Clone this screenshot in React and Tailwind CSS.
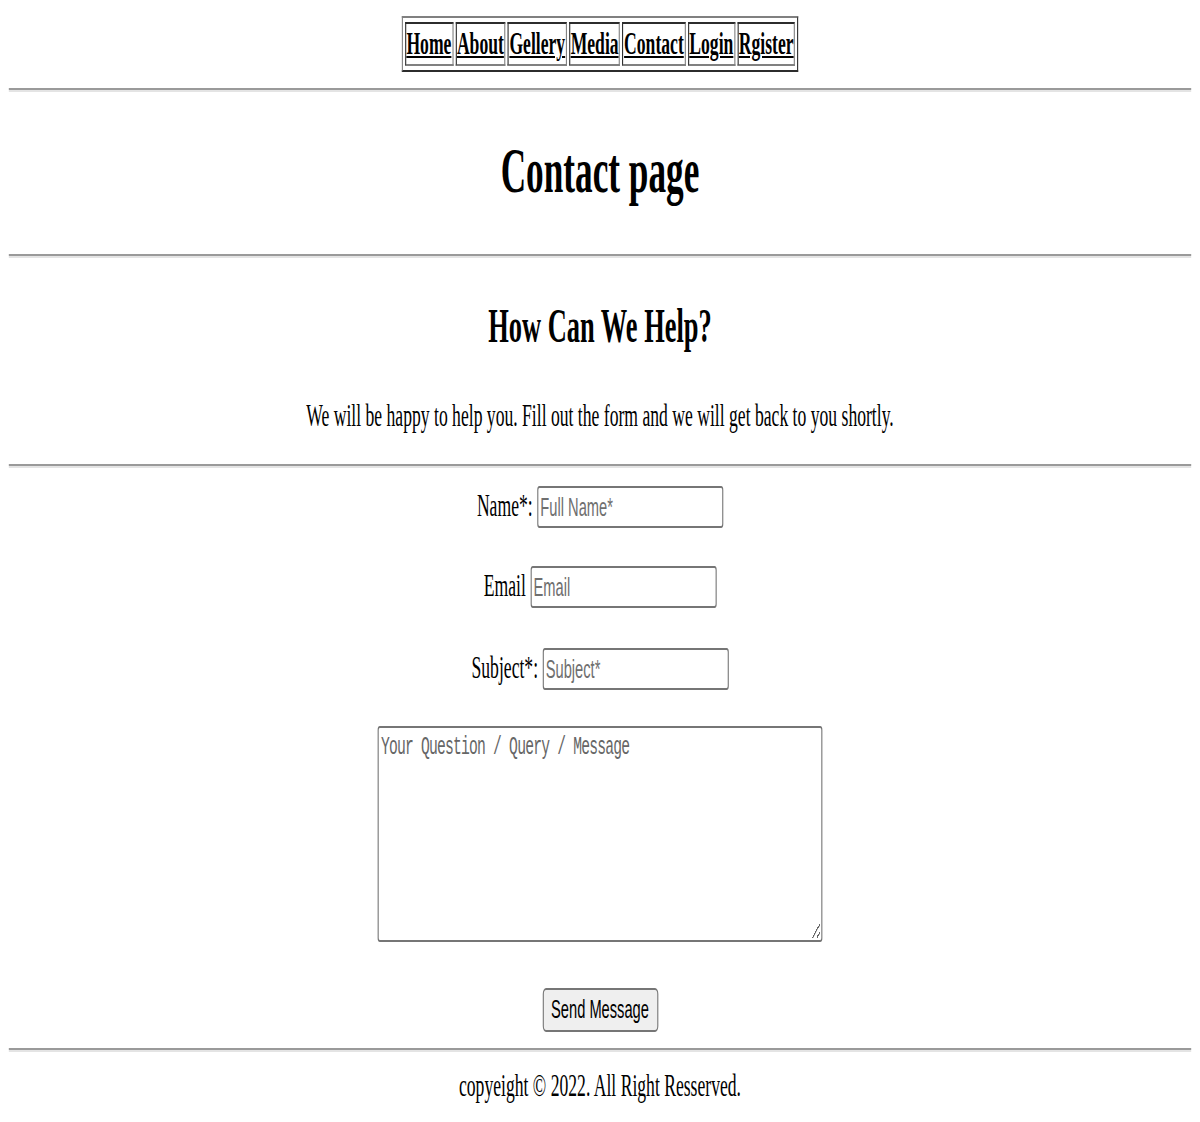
import React from "react";

const navItems = ["Home", "About", "Gellery", "Media", "Contact", "Login", "Rgister"];

function Rule() {
  return (
    <hr className="my-2 h-[2px] border-0 border-t border-b border-t-[#9a9a9a] border-b-[#e4e4e4]" />
  );
}

const inputCls =
  "h-[21px] w-[169px] rounded-[2px] border border-[#767676] px-[2px] py-[1px] font-['Liberation_Sans',Arial,sans-serif] text-[13.33px] placeholder:text-[#6f6f6f]";

export default function App() {
  return (
    <div className="h-[1122px] w-[1200px] overflow-hidden bg-white">
      <div className="w-[1090px] origin-top-left scale-x-[1.10092] scale-y-[2] bg-white p-2 font-['Liberation_Serif','Times_New_Roman',serif] text-[16px] text-black">
        <nav className="flex justify-center">
          <table className="border-separate border-spacing-[2px] border border-[#808080] [border-style:outset]">
            <tbody>
              <tr>
                {navItems.map((item) => (
                  <th
                    key={item}
                    className="border border-[#808080] [border-style:inset] px-[0.5px] py-[1px] text-[16px] font-bold leading-[18px]"
                  >
                    <a href="#" className="text-black underline">
                      {item}
                    </a>
                  </th>
                ))}
              </tr>
            </tbody>
          </table>
        </nav>

        <Rule />

        <h1 className="mt-[21.44px] mb-[23px] text-center text-[32px] font-bold leading-[37px]">Contact page</h1>

        <Rule />

        <h2 className="mt-[19.92px] mb-[21.5px] text-center text-[24px] font-bold leading-[28px]">
          How Can We Help?
        </h2>
        <p className="mb-[15px] text-center leading-[18.4px]">
          We will be happy to help you. Fill out the form and we will get back to you shortly.
        </p>

        <Rule />

        <form className="flex flex-col items-center pt-[0.5px]" onSubmit={(e) => e.preventDefault()}>
          <div className="flex h-[21px] items-baseline justify-center gap-[4px]">
            <label className="leading-[18.4px]">Name*:</label>
            <input type="text" placeholder="Full Name*" className={inputCls} />
          </div>
          <div className="mt-[19.5px] flex h-[21px] items-baseline justify-center gap-[4px]">
            <label className="leading-[18.4px]">Email</label>
            <input type="email" placeholder="Email" className={inputCls} />
          </div>
          <div className="mt-[19.5px] flex h-[21px] items-baseline justify-center gap-[4px]">
            <label className="leading-[18.4px]">Subject*:</label>
            <input type="text" placeholder="Subject*" className={inputCls} />
          </div>
          <textarea
            placeholder="Your Question / Query / Message"
            className="mt-[18.5px] h-[107.5px] w-[404px] rounded-[2px] border border-[#767676] px-[2px] py-[2px] font-['Liberation_Mono','DejaVu_Sans_Mono',monospace] text-[13.33px] leading-[16px] tracking-[-0.72px] placeholder:text-[#666666]"
          />
          <button
            type="submit"
            className="mt-[23.5px] h-[21.5px] w-[105px] rounded-[3px] border border-[#767676] bg-[#efefef] px-[6px] font-['Liberation_Sans',Arial,sans-serif] text-[13.33px] leading-[16px] text-black"
          >
            Send Message
          </button>
        </form>

        <div className="mt-[1.5px]">
          <Rule />
        </div>

        <div className="text-center leading-[18.4px]">copyeight © 2022. All Right Resserved.</div>
      </div>
    </div>
  );
}
